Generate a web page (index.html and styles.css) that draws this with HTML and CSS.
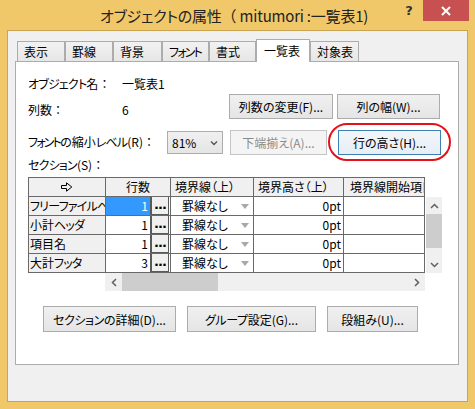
FILE: index.html
```html
<!DOCTYPE html>
<html lang="ja">
<head>
<meta charset="utf-8">
<title>オブジェクトの属性</title>
<link rel="stylesheet" href="styles.css">
</head>
<body>
<div class="window">
  <div class="titlebar">
    <div class="title">オブジェクトの属性<span class="fw">（</span> mitumori :一覧表1)</div>
    <div class="help">?</div>
    <div class="close"><svg width="10" height="10" viewBox="0 0 10 10"><path d="M1 1L9 9M9 1L1 9" stroke="#fff" stroke-width="2"/></svg></div>
  </div>
  <div class="client">
    <div class="tabs">
      <div class="tab t1">表示</div>
      <div class="tab t2">罫線</div>
      <div class="tab t3">背景</div>
      <div class="tab t4"><span class="k2">フォント</span></div>
      <div class="tab t5">書式</div>
      <div class="tab t6 active">一覧表</div>
      <div class="tab t7">対象表</div>
    </div>
    <div class="panel">
      <div class="row1">
        <div class="label lw"><span class="k">オブジェクト</span>名<span class="fw">：</span></div>
        <div class="label">一覧表1</div>
      </div>
      <div class="row2">
        <div class="label lw lift">列数<span class="fw">：</span></div>
        <div class="label lift value">6</div>
        <div class="btn b-cols">列数の変更(F)...</div>
        <div class="btn b-width">列の幅(W)...</div>
      </div>
      <div class="row3">
        <div class="label lw2 lift3"><span class="k2">フォント</span>の縮小<span class="k">レベル</span>(R)<span class="fw">：</span></div>
        <div class="select">
          <span>81%</span>
          <svg width="8" height="6" viewBox="0 0 8 6"><path d="M1 1.5L4 4.5L7 1.5" stroke="#555" stroke-width="1.4" fill="none"/></svg>
        </div>
        <div class="btn disabled b-bottom">下端揃え(A)...</div>
        <div class="mark"><div class="btn focus b-height">行の高さ(H)...</div></div>
      </div>
      <div class="row4 label"><span class="k">セクション</span>(S)<span class="fw">：</span></div>
      <div class="gridwrap">
        <div class="grid">
          <div class="hd"><svg width="12" height="10" viewBox="0 0 12 10"><path d="M0.5 3.5H5.5V0.8L10.8 5L5.5 9.2V6.5H0.5Z" stroke="#000" stroke-width="1" fill="none"/></svg></div>
          <div class="hd center">行数</div>
          <div class="hd left">境界線（上）</div>
          <div class="hd left">境界高さ（上）</div>
          <div class="hd left l6">境界線開始項目</div>

          <div class="rh"><span class="k">フリーファイルヘッダ</span></div>
          <div class="cell c2"><span class="num sel">1</span><span class="dots">...</span></div>
          <div class="cell c3"><span class="kt">罫線なし</span><span class="tri"></span></div>
          <div class="cell c4">0pt</div>
          <div class="cell"></div>

          <div class="rh">小計<span class="k">ヘッダ</span></div>
          <div class="cell c2"><span class="num">1</span><span class="dots">...</span></div>
          <div class="cell c3"><span class="kt">罫線なし</span><span class="tri"></span></div>
          <div class="cell c4">0pt</div>
          <div class="cell"></div>

          <div class="rh">項目名</div>
          <div class="cell c2"><span class="num">1</span><span class="dots">...</span></div>
          <div class="cell c3"><span class="kt">罫線なし</span><span class="tri"></span></div>
          <div class="cell c4">0pt</div>
          <div class="cell"></div>

          <div class="rh">大計<span class="k">フッタ</span></div>
          <div class="cell c2"><span class="num">3</span><span class="dots">...</span></div>
          <div class="cell c3"><span class="kt">罫線なし</span><span class="tri"></span></div>
          <div class="cell c4">0pt</div>
          <div class="cell"></div>
        </div>
        <div class="vscroll">
          <div class="arrow"><svg width="9" height="6" viewBox="0 0 9 6"><path d="M1 5L4.5 1.5L8 5" stroke="#606060" stroke-width="1.5" fill="none"/></svg></div>
          <div class="vthumb"></div>
          <div class="vspace"></div>
          <div class="arrow"><svg width="9" height="6" viewBox="0 0 9 6"><path d="M1 1L4.5 4.5L8 1" stroke="#606060" stroke-width="1.5" fill="none"/></svg></div>
        </div>
        <div class="hscroll">
          <div class="harrow"><svg width="6" height="9" viewBox="0 0 6 9"><path d="M5 1L1.5 4.5L5 8" stroke="#606060" stroke-width="1.5" fill="none"/></svg></div>
          <div class="hthumb"></div>
          <div class="hspace"></div>
          <div class="harrow"><svg width="6" height="9" viewBox="0 0 6 9"><path d="M1 1L4.5 4.5L1 8" stroke="#606060" stroke-width="1.5" fill="none"/></svg></div>
        </div>
      </div>
      <div class="bottom">
        <div class="btn b-sec"><span class="k1">セクション</span>の詳細(D)...</div>
        <div class="btn b-grp"><span class="k1">グループ</span>設定(G)...</div>
        <div class="btn b-col">段組み(U)...</div>
      </div>
    </div>
  </div>
</div>
</body>
</html>
```

FILE: styles.css
```css
html, body {
  margin: 0;
  padding: 0;
}
body {
  width: 475px;
  height: 409px;
  overflow: hidden;
  font-family: "Noto Sans CJK JP", "Noto Sans", sans-serif;
  font-feature-settings: "palt";
  font-size: 12px;
  color: #000;
}
.fw { font-feature-settings: normal; }
.k { letter-spacing: -0.8px; }
.k1 { letter-spacing: -0.4px; }
.k2 { letter-spacing: -1.8px; }
.window {
  width: 475px;
  height: 409px;
  box-sizing: border-box;
  background: #F0C86A;
  display: flex;
  flex-direction: column;
}
.titlebar {
  height: 30px;
  display: flex;
  align-items: flex-start;
  flex: none;
}
.title {
  flex: 1;
  padding-left: 100px;
  font-size: 15px;
  line-height: 31px;
  color: #222;
  white-space: nowrap;
  letter-spacing: -0.2px;
}
.help {
  width: 20px;
  text-align: center;
  font-family: "DejaVu Sans", sans-serif;
  font-weight: bold;
  font-size: 13px;
  line-height: 22px;
  color: #333;
  margin-right: 4px;
}
.close {
  width: 46px;
  height: 21px;
  background: #C75050;
  margin-right: 6px;
  display: flex;
  align-items: center;
  justify-content: center;
}
.client {
  flex: 1;
  margin: 0 7px 7px 7px;
  border: 1px solid #C9A453;
  background: #F0F0F0;
  padding: 8px 8px 0 7px;
}
.tabs {
  display: flex;
  align-items: flex-end;
  height: 22px;
  padding-left: 2px;
}
.tab {
  box-sizing: border-box;
  height: 20px;
  border: 1px solid #ACACAC;
  border-bottom: none;
  background: linear-gradient(#F2F2F2, #E6E6E6);
  padding-left: 6px;
  line-height: 19px;
  white-space: nowrap;
  overflow: hidden;
}
.t1 { width: 48px; }
.t2 { width: 48px; }
.t3 { width: 49px; }
.t4 { width: 47px; }
.t5 { width: 47px; }
.t6 { width: 54px; }
.t7 { width: 49px; }
.tab.active {
  height: 23px;
  margin-bottom: -1px;
  background: #fff;
  position: relative;
  z-index: 1;
  padding-left: 7px;
  line-height: 21px;
}
.panel {
  box-sizing: border-box;
  height: 304px;
  border: 1px solid #ACACAC;
  background: #fff;
  padding: 0 18px 0 12px;
}
.label {
  line-height: 16px;
  white-space: nowrap;
}
.lw { width: 94px; flex: none; }
.lw2 { width: 139px; flex: none; }
.row1 {
  margin-top: 14px;
  height: 16px;
  display: flex;
}
.row2 {
  margin-top: 2px;
  height: 25px;
  display: flex;
  align-items: flex-start;
}
.lift { margin-top: 8px; }
.value { flex: 1; }
.row3 {
  margin-top: 11px;
  height: 25px;
  display: flex;
  align-items: flex-start;
}
.lift3 { margin-top: 4px; }
.row4 {
  margin-top: 2px;
}
.btn {
  box-sizing: border-box;
  height: 25px;
  border: 1px solid #ACACAC;
  background: linear-gradient(#F0F0F0, #E5E5E5);
  display: flex;
  align-items: center;
  justify-content: center;
  white-space: nowrap;
  flex: none;
}
.b-cols { width: 104px; }
.b-width { width: 103px; margin-left: 4px; }
.btn.disabled {
  width: 97px;
  margin-left: 7px;
  color: #8A8A8A;
  border-color: #C4C4C4;
  background: #F4F4F4;
}
.mark {
  position: relative;
  margin-left: 11px;
}
.mark::after {
  content: "";
  position: absolute;
  top: -7px;
  bottom: -6px;
  left: -10px;
  right: -10px;
  border: 2px solid #E5101A;
  border-radius: 19px;
}
.btn.focus {
  width: 103px;
  border-color: #3C7FB1;
  background: linear-gradient(#F2F6FA, #E6EEF6);
}
.select {
  box-sizing: border-box;
  width: 56px;
  height: 23px;
  margin-top: 1px;
  border: 1px solid #ACACAC;
  background: linear-gradient(#F0F0F0, #E5E5E5);
  display: flex;
  align-items: center;
  justify-content: space-between;
  padding: 0 4px 0 4px;
  flex: none;
}
.gridwrap {
  margin-top: 4px;
  display: grid;
  grid-template-columns: 397px 16px;
  column-gap: 1px;
}
.grid {
  display: grid;
  grid-template-columns: 76px 64px 82px 89px 80px;
  grid-template-rows: repeat(5, 18px);
  gap: 1px;
  background: #696969;
  border: 1px solid #696969;
}
.hd {
  background: #F0F0F0;
  line-height: 18px;
  overflow: hidden;
  white-space: nowrap;
  display: flex;
  align-items: center;
  justify-content: center;
}
.hd.left { justify-content: flex-start; padding-left: 4px; }
.hd.l6 { padding-left: 6px; }
.rh {
  background: #F0F0F0;
  line-height: 18px;
  padding-left: 1px;
  overflow: hidden;
  white-space: nowrap;
}
.cell {
  background: #fff;
  line-height: 18px;
  overflow: hidden;
  white-space: nowrap;
}
.c2 {
  display: flex;
}
.num {
  width: 44px;
  text-align: right;
  padding-right: 2px;
  box-sizing: border-box;
}
.num.sel {
  background: #3399FF;
  color: #fff;
}
.dots {
  box-sizing: border-box;
  width: 19px;
  height: 18px;
  border-left: 2px solid #5A5A5A;
  border-right: 1px solid #5A5A5A;
  border-bottom: 1px solid #5A5A5A;
  background: #F0F0F0;
  font-family: "DejaVu Sans", sans-serif;
  font-weight: bold;
  font-size: 13px;
  text-align: center;
  line-height: 15px;
  letter-spacing: -1px;
  overflow: hidden;
}
.c3 {
  display: flex;
  align-items: center;
}
.kt {
  padding-left: 11px;
}
.tri {
  margin-left: auto;
  margin-right: 4px;
  width: 0;
  height: 0;
  border-left: 4px solid transparent;
  border-right: 4px solid transparent;
  border-top: 5px solid #A8A8A8;
}
.c4 {
  text-align: right;
  padding-right: 2px;
}
.vscroll {
  align-self: end;
  height: 76px;
  background: #F0F0F0;
  display: flex;
  flex-direction: column;
}
.arrow {
  height: 17px;
  display: flex;
  align-items: center;
  justify-content: center;
  flex: none;
}
.vthumb {
  height: 34px;
  background: #CDCDCD;
  flex: none;
}
.vspace { flex: 1; }
.hscroll {
  grid-column: 1;
  margin-left: 77px;
  width: 320px;
  height: 18px;
  background: #F0F0F0;
  display: flex;
}
.harrow {
  width: 17px;
  display: flex;
  align-items: center;
  justify-content: center;
  flex: none;
}
.hthumb {
  width: 96px;
  background: #CDCDCD;
  flex: none;
}
.hspace { flex: 1; }
.bottom {
  margin-top: 15px;
  margin-left: 15px;
  display: flex;
  gap: 11px;
}
.bottom .btn { height: 26px; }
.b-sec { width: 133px; }
.b-grp { width: 129px; }
.b-col { width: 91px; }
```
